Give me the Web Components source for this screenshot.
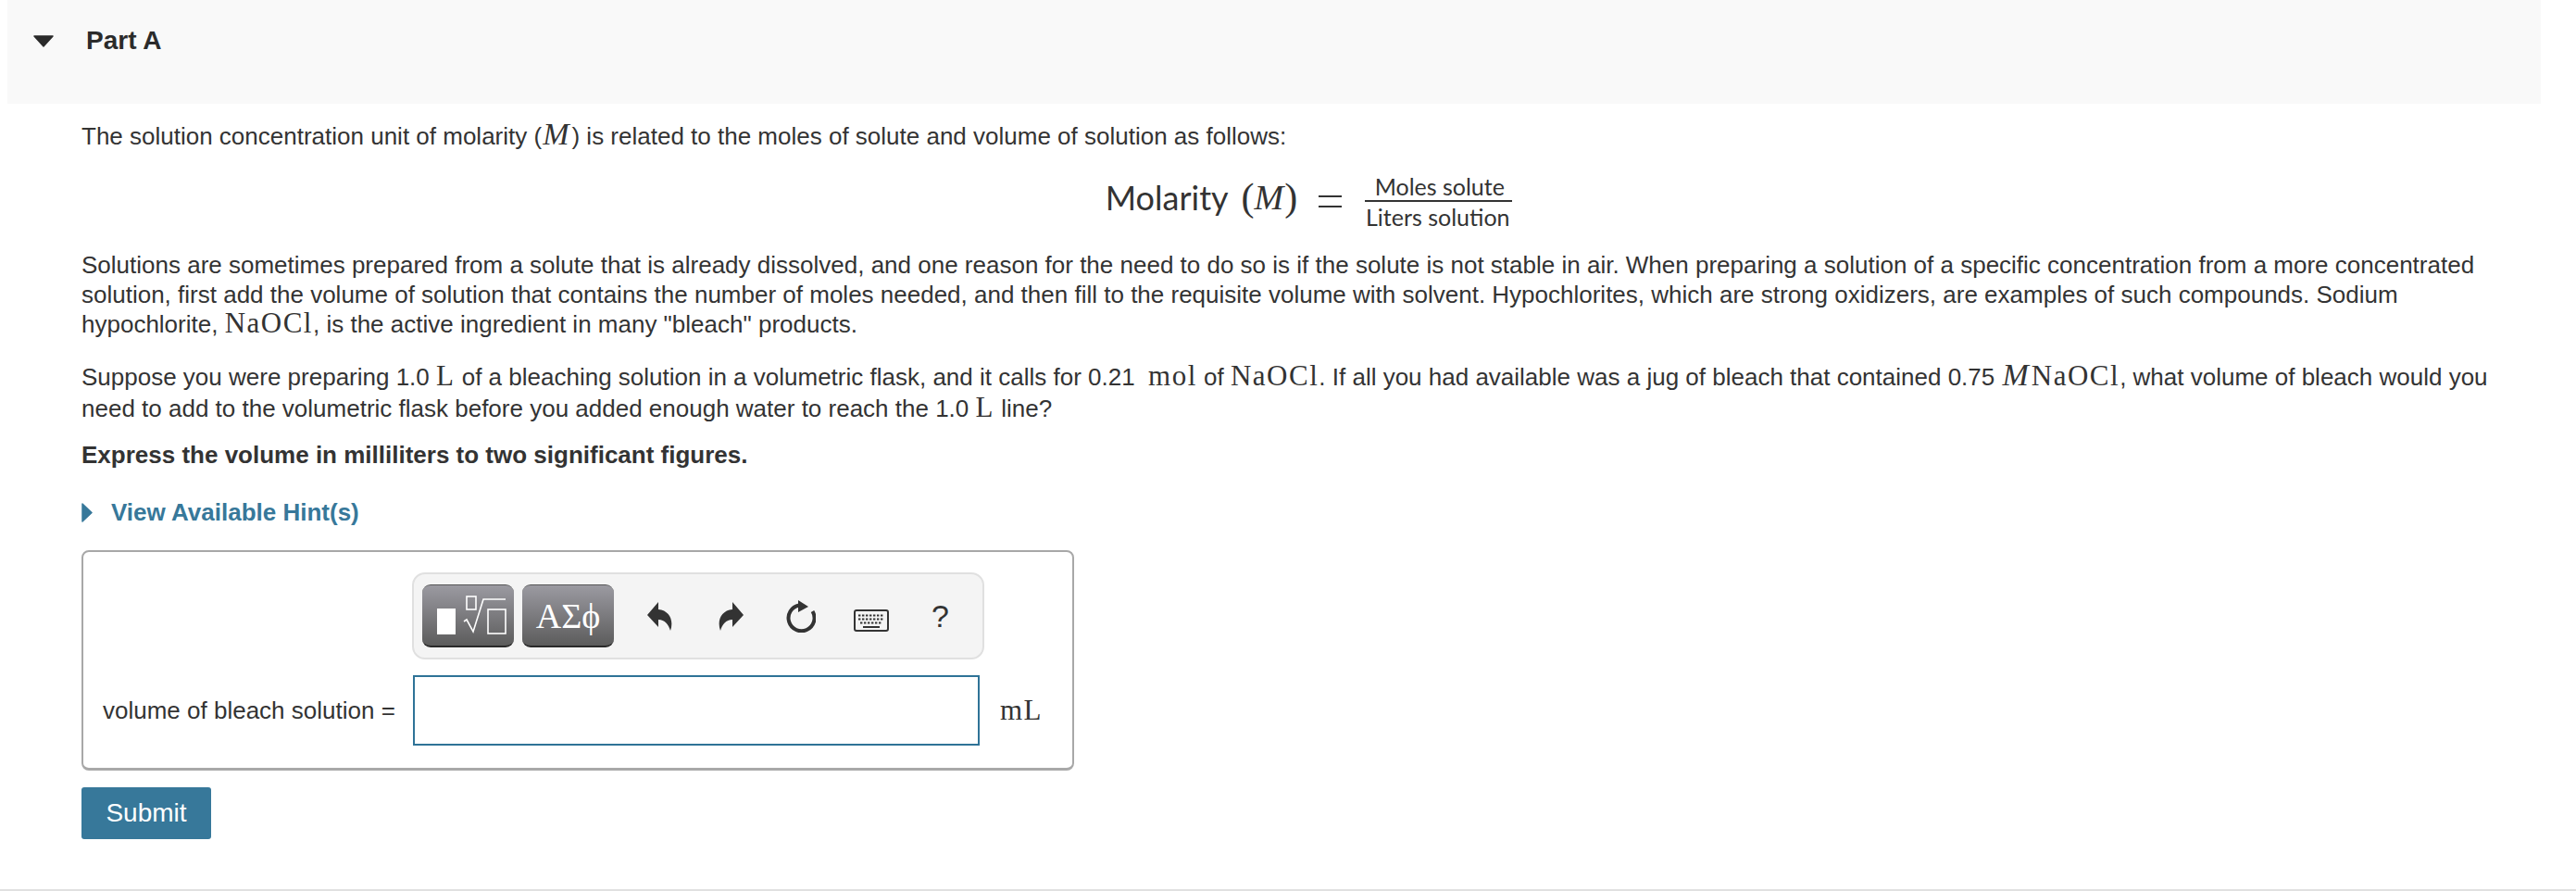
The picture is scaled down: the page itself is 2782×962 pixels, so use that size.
<!DOCTYPE html>
<html lang="en">
<head>
<meta charset="utf-8">
<title>Part A</title>
<style>
  html, body { margin: 0; background: #fff; }
  body { font: 26px/34px "Liberation Sans", Arial, sans-serif; color: #333; height: 962px; overflow: hidden; }
</style>
</head>
<body>
<part-section title-text="Part A">
  <q-para style="margin-top:18px">The solution concentration unit of molarity (<m-i>M</m-i>) is related to the moles of solute and volume of solution as follows:</q-para>
  <molarity-eq></molarity-eq>
  <q-para style="margin-top:24px;line-height:32px">Solutions are sometimes prepared from a solute that is already dissolved, and one reason for the need to do so is if the solute is not stable in air. When preparing a solution of a specific concentration from a more concentrated solution, first add the volume of solution that contains the number of moles needed, and then fill to the requisite volume with solvent. Hypochlorites, which are strong oxidizers, are examples of such compounds. Sodium hypochlorite, <m-r>NaOCl</m-r>, is the active ingredient in many "bleach" products.</q-para>
  <q-para style="margin-top:24px">Suppose you were preparing 1.0 <m-r>L</m-r> of a bleaching solution in a volumetric flask, and it calls for 0.21 &nbsp;<m-r>mol</m-r> of <m-r>NaOCl</m-r>. If all you had available was a jug of bleach that contained 0.75 <m-i>M</m-i><m-r>NaOCl</m-r>, what volume of bleach would you need to add to the volumetric flask before you added enough water to reach the 1.0 <m-r>L</m-r> line?</q-para>
  <q-para style="margin-top:16px;font-weight:bold">Express the volume in milliliters to two significant figures.</q-para>
  <hint-toggle>View Available Hint(s)</hint-toggle>
  <answer-box label="volume of bleach solution =" unit="mL"></answer-box>
  <submit-button>Submit</submit-button>
</part-section>

<script>
class PartSection extends HTMLElement {
  constructor() {
    super()
    const shadow = this.attachShadow({ mode: 'open' })
    shadow.innerHTML = `
      <style>
        :host { display: block; height: 960px; border-bottom: 2px solid #e0e0e0; }
        .head { display: flex; align-items: flex-start; height: 112px; margin: 0 38px 0 8px; background: #f9f9f9; box-sizing: border-box; padding: 27px 0 0 28px; }
        .head svg { width: 22px; height: 13px; margin-top: 11px; }
        .head b { margin-left: 35px; font-size: 28px; line-height: 34px; color: #2b2b2b; }
        .body { padding: 0 40px 0 88px; }
      </style>
      <div class="head">
        <svg viewBox="0 0 22 13"><path d="M1 1H21L11 12Z" fill="#2b2b2b" stroke="#2b2b2b" stroke-width="1.5" stroke-linejoin="round"/></svg>
        <b>${this.getAttribute('title-text')}</b>
      </div>
      <div class="body"><slot></slot></div>`
  }
}

class QPara extends HTMLElement {
  constructor() {
    super()
    const shadow = this.attachShadow({ mode: 'open' })
    shadow.innerHTML = `<style>:host { display: block; }</style><slot></slot>`
  }
}

class MathRoman extends HTMLElement {
  constructor() {
    super()
    const shadow = this.attachShadow({ mode: 'open' })
    shadow.innerHTML = `<style>:host { font-family: "Liberation Serif", serif; font-weight: normal; font-size: 31px; letter-spacing: 1.5px; line-height: 0; }</style><slot></slot>`
  }
}

class MathItalic extends HTMLElement {
  constructor() {
    super()
    const shadow = this.attachShadow({ mode: 'open' })
    shadow.innerHTML = `<style>:host { font-family: "Liberation Serif", serif; font-style: italic; font-size: 34px; line-height: 0; padding: 0 3px 0 1px; }</style><slot></slot>`
  }
}

class MolarityEq extends HTMLElement {
  constructor() {
    super()
    const shadow = this.attachShadow({ mode: 'open' })
    shadow.innerHTML = `
      <style>
        :host { display: flex; justify-content: center; align-items: center; height: 66px; margin-top: 16px; font-family: Lato, sans-serif; padding-right: 3px; }
        .lhs { display: flex; align-items: center; font-size: 36px; line-height: 40px; }
        .lhs .m { font-family: "Liberation Serif", serif; font-size: 42px; margin-left: 14px; display: flex; align-items: center; font-weight: normal; }
        .lhs i { font-size: 38px; padding-right: 1px; }
        .eq { width: 25px; height: 9px; box-sizing: content-box; border-top: 2px solid #333; border-bottom: 2px solid #333; margin: 9px 25px 0 23px; }
        .frac { display: flex; flex-direction: column; align-items: center; width: 159px; font-size: 25px; margin-top: 11px; }
        .num { border-bottom: 2px solid #333; width: 159px; text-align: center; line-height: 30px; padding-left: 2px; box-sizing: border-box; }
        .den { line-height: 33px; white-space: nowrap; margin-left: -2px; }
      </style>
      <span class="lhs">Molarity<span class="m">(<i>M</i>)</span></span>
      <span class="eq"></span>
      <span class="frac"><span class="num">Moles solute</span><span class="den">Liters solution</span></span>`
  }
}

class HintToggle extends HTMLElement {
  constructor() {
    super()
    const shadow = this.attachShadow({ mode: 'open' })
    shadow.innerHTML = `
      <style>
        :host { display: flex; align-items: center; gap: 20px; margin-top: 28px; height: 34px; color: #37789a; font-weight: bold; }
        svg { width: 12px; height: 21px; }
      </style>
      <svg viewBox="0 0 12 21"><path d="M1 1L11 10.5L1 20Z" fill="#37789a" stroke="#37789a" stroke-width="1.5" stroke-linejoin="round"/></svg>
      <slot></slot>`
  }
}

class MathToolbar extends HTMLElement {
  constructor() {
    super()
    const shadow = this.attachShadow({ mode: 'open' })
    shadow.innerHTML = `
      <style>
        :host { display: flex; align-items: center; box-sizing: border-box; width: 618px; height: 94px; padding: 0 0 0 9px; background: #f4f4f4; border: 2px solid #e0e0e0; border-radius: 14px; }
        .btn { display: flex; align-items: center; justify-content: center; width: 99px; height: 68px; box-sizing: border-box; margin-right: 9px; border-radius: 9px; background: linear-gradient(#9b9aa1, #5c5c5c); border-bottom: 2px solid #2a2a2a; border-top: 1px solid #555; color: #fff; font: 38px "Liberation Serif", serif; }
        .btn svg { display: block; margin: -1px 0; }
        .icons { display: flex; align-items: center; margin-left: 2px; }
        .ic { display: flex; justify-content: center; width: 77px; }
        .kb { padding-top: 9px; }
        .q { font-size: 34px; color: #333; line-height: 40px; margin-left: -2px; }
      </style>
      <span class="btn">
        <svg width="99" height="68" viewBox="0 0 99 68">
          <rect x="16" y="26" width="20" height="28" fill="#fff"/>
          <g fill="none" stroke="#fff" stroke-width="1.6">
            <rect x="48" y="13" width="10" height="14"/>
            <path d="M45 40L48 38L55 51L66 16H90"/>
            <rect x="71" y="27" width="19" height="26"/>
          </g>
        </svg>
      </span>
      <span class="btn">&Alpha;&Sigma;&#981;</span>
      <span class="icons">
        <span class="ic"><svg width="27" height="31" viewBox="0 0 27 31"><path d="M12 0L0 14L12 27V19C19 19 23 24 25 31C29 20 24 9 12 8Z" fill="#333"/></svg></span>
        <span class="ic"><svg width="27" height="31" viewBox="0 0 27 31"><path d="M15 0L27 14L15 27V19C8 19 4 24 2 31C-2 20 3 9 15 8Z" fill="#333"/></svg></span>
        <span class="ic" style="margin-left:-2px"><svg width="32" height="35" viewBox="0 0 32 35"><path d="M14 5.5A14 14 0 1 0 28.5 12" fill="none" stroke="#333" stroke-width="4"/><path d="M13 0L24 7L13 13Z" fill="#333"/></svg></span>
        <span class="ic kb" style="margin-left:-1px"><svg width="38" height="24" viewBox="0 0 38 24"><rect x="1" y="1" width="36" height="22" rx="2" fill="#f4f4f4" stroke="#333" stroke-width="2"/><path d="M5 6.5H33M5 10.5H33M7 14.5H31" stroke="#333" stroke-width="2.2" stroke-dasharray="2.4 1.6"/><path d="M10 19H28" stroke="#333" stroke-width="2"/></svg></span>
        <span class="ic q">?</span>
      </span>`
  }
}

class AnswerBox extends HTMLElement {
  constructor() {
    super()
    const shadow = this.attachShadow({ mode: 'open' })
    shadow.innerHTML = `
      <style>
        :host { display: block; box-sizing: border-box; width: 1072px; height: 238px; margin-top: 24px; border: 2px solid #a8a8a8; border-bottom-width: 3px; border-radius: 8px; padding: 22px 0 0 21px; }
        math-toolbar { margin-left: 334px; }
        .row { display: flex; align-items: center; margin-top: 17px; }
        .label { width: 335px; flex: none; }
        .input { width: 612px; height: 76px; box-sizing: border-box; border: 2px solid #2f7397; background: #fff; }
        .unit { margin-left: 22px; font: 31px "Liberation Serif", serif; letter-spacing: 1.5px; }
      </style>
      <math-toolbar></math-toolbar>
      <div class="row">
        <span class="label">${this.getAttribute('label')}</span>
        <div class="input"></div>
        <span class="unit">${this.getAttribute('unit')}</span>
      </div>`
  }
}

class SubmitButton extends HTMLElement {
  constructor() {
    super()
    const shadow = this.attachShadow({ mode: 'open' })
    shadow.innerHTML = `
      <style>
        :host { display: flex; align-items: center; justify-content: center; width: 140px; height: 56px; margin-top: 18px; background: #37789a; border-radius: 3px; color: #fff; font-size: 28px; }
      </style>
      <slot></slot>`
  }
}

customElements.define('part-section', PartSection)
customElements.define('q-para', QPara)
customElements.define('m-r', MathRoman)
customElements.define('m-i', MathItalic)
customElements.define('molarity-eq', MolarityEq)
customElements.define('hint-toggle', HintToggle)
customElements.define('math-toolbar', MathToolbar)
customElements.define('answer-box', AnswerBox)
customElements.define('submit-button', SubmitButton)
</script>
</body>
</html>
